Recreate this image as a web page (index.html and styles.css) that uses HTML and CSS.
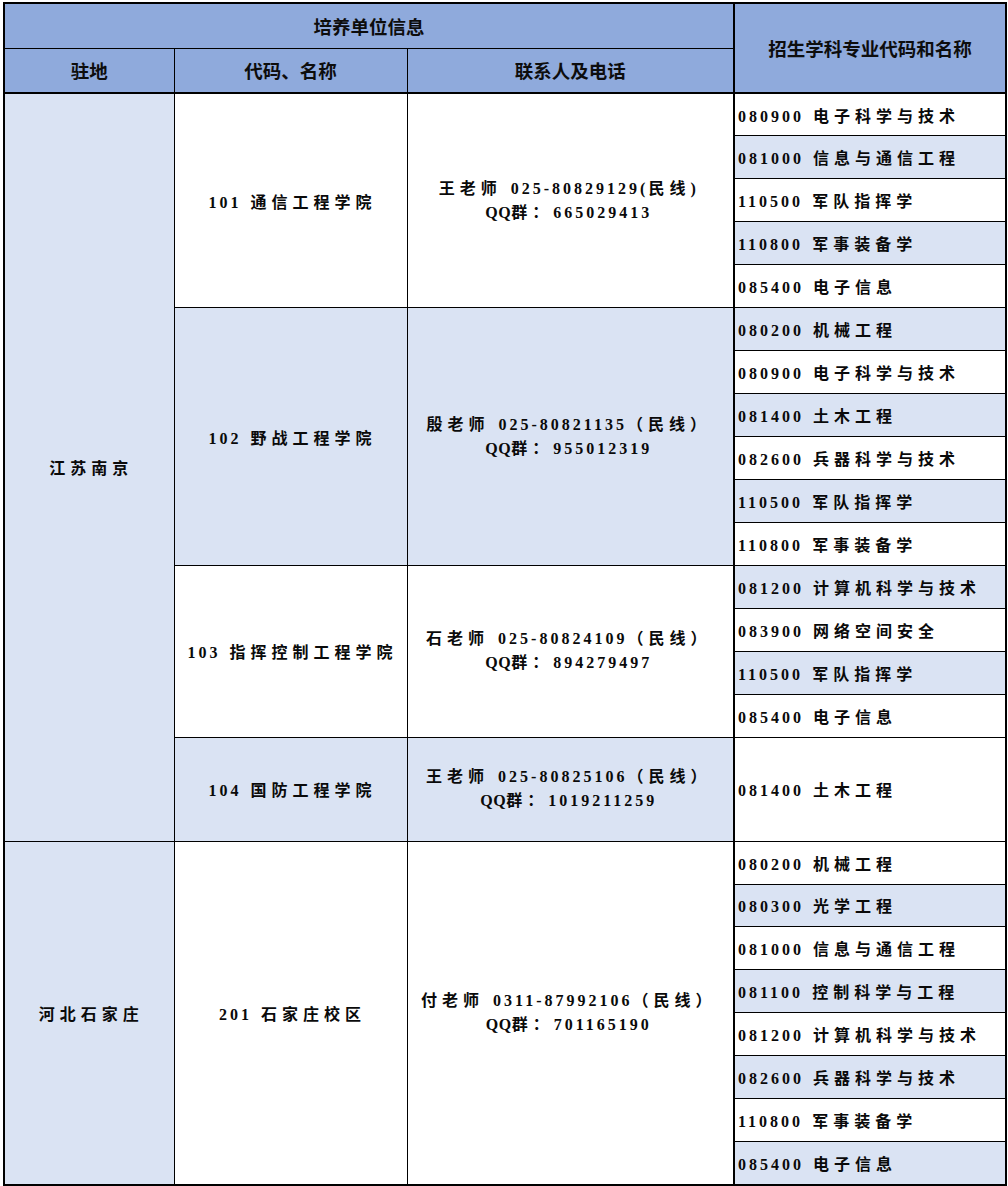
FILE: index.html
```html
<!DOCTYPE html>
<html lang="zh-CN">
<head>
<meta charset="utf-8">
<title>培养单位信息</title>
<link rel="stylesheet" href="styles.css">
</head>
<body>
<table class="grid">
  <colgroup>
    <col class="c1"><col class="c2"><col class="c3"><col class="c4">
  </colgroup>
  <thead>
    <tr class="h1">
      <th colspan="3">培养单位信息</th>
      <th rowspan="2" class="hsub">招生学科专业代码和名称</th>
    </tr>
    <tr class="h2">
      <th>驻地</th>
      <th>代码、名称</th>
      <th>联系人及电话</th>
    </tr>
  </thead>
  <tbody>
    <tr>
      <td rowspan="16" class="loc lt">江苏南京</td>
      <td rowspan="5" class="unit"><span class="n">101</span> 通信工程学院</td>
      <td rowspan="5" class="contact">王老师 <span class="n">025-80829129(</span>民线<span class="n">)</span><br><span class="q">QQ</span>群：<span class="n">665029413</span></td>
      <td class="subj"><span class="n">080900</span> 电子科学与技术</td>
    </tr>
    <tr><td class="subj lt"><span class="n">081000</span> 信息与通信工程</td></tr>
    <tr><td class="subj"><span class="n">110500</span> 军队指挥学</td></tr>
    <tr><td class="subj lt"><span class="n">110800</span> 军事装备学</td></tr>
    <tr><td class="subj"><span class="n">085400</span> 电子信息</td></tr>

    <tr>
      <td rowspan="6" class="unit lt"><span class="n">102</span> 野战工程学院</td>
      <td rowspan="6" class="contact lt">殷老师 <span class="n">025-80821135</span>（民线）<br><span class="q">QQ</span>群：<span class="n">955012319</span></td>
      <td class="subj lt"><span class="n">080200</span> 机械工程</td>
    </tr>
    <tr><td class="subj"><span class="n">080900</span> 电子科学与技术</td></tr>
    <tr><td class="subj lt"><span class="n">081400</span> 土木工程</td></tr>
    <tr><td class="subj"><span class="n">082600</span> 兵器科学与技术</td></tr>
    <tr><td class="subj lt"><span class="n">110500</span> 军队指挥学</td></tr>
    <tr><td class="subj"><span class="n">110800</span> 军事装备学</td></tr>

    <tr>
      <td rowspan="4" class="unit"><span class="n">103</span> 指挥控制工程学院</td>
      <td rowspan="4" class="contact">石老师 <span class="n">025-80824109</span>（民线）<br><span class="q">QQ</span>群：<span class="n">894279497</span></td>
      <td class="subj lt"><span class="n">081200</span> 计算机科学与技术</td>
    </tr>
    <tr><td class="subj"><span class="n">083900</span> 网络空间安全</td></tr>
    <tr><td class="subj lt"><span class="n">110500</span> 军队指挥学</td></tr>
    <tr><td class="subj"><span class="n">085400</span> 电子信息</td></tr>

    <tr class="tall">
      <td class="unit lt"><span class="n">104</span> 国防工程学院</td>
      <td class="contact lt">王老师 <span class="n">025-80825106</span>（民线）<br><span class="q">QQ</span>群：<span class="n">1019211259</span></td>
      <td class="subj"><span class="n">081400</span> 土木工程</td>
    </tr>

    <tr>
      <td rowspan="8" class="loc lt">河北石家庄</td>
      <td rowspan="8" class="unit"><span class="n">201</span> 石家庄校区</td>
      <td rowspan="8" class="contact">付老师 <span class="n">0311-87992106</span>（民线）<br><span class="q">QQ</span>群：<span class="n">701165190</span></td>
      <td class="subj"><span class="n">080200</span> 机械工程</td>
    </tr>
    <tr><td class="subj lt"><span class="n">080300</span> 光学工程</td></tr>
    <tr><td class="subj"><span class="n">081000</span> 信息与通信工程</td></tr>
    <tr><td class="subj lt"><span class="n">081100</span> 控制科学与工程</td></tr>
    <tr><td class="subj"><span class="n">081200</span> 计算机科学与技术</td></tr>
    <tr><td class="subj lt"><span class="n">082600</span> 兵器科学与技术</td></tr>
    <tr><td class="subj"><span class="n">110800</span> 军事装备学</td></tr>
    <tr><td class="subj lt"><span class="n">085400</span> 电子信息</td></tr>
  </tbody>
</table>
</body>
</html>
```
FILE: styles.css
```css
html, body {
  margin: 0;
  padding: 0;
  background: #ffffff;
}

.grid {
  margin: 2px 0 0 3px;
  width: 1004px;
  table-layout: fixed;
  border-collapse: collapse;
  border: 2px solid #000;
  color: #000;
}

.c1 { width: 170px; }
.c2 { width: 233px; }
.c3 { width: 327px; }
.c4 { width: 272px; }

th {
  background: #8faadc;
  font-family: "Noto Sans CJK SC", "Noto Sans", sans-serif;
  font-weight: 700;
  font-size: 18.5px;
  color: #0d0d0d;
  border: 1px solid #000;
  padding: 0;
  text-align: center;
  vertical-align: middle;
}

.h1 { height: 45px; }
.h2 { height: 45px; }
.h2 th { border-bottom: 2px solid #000; }
.hsub { border-left: 2px solid #000; border-bottom: 2px solid #000; }

td {
  border: 1px solid #000;
  padding: 0;
  font-family: "Liberation Serif", "Noto Sans CJK SC", serif;
  font-weight: 700;
  font-size: 16px;
  letter-spacing: 5px;
  vertical-align: middle;
  background: #ffffff;
  color: #0a0a0a;
}

.n { letter-spacing: 3px; }
.q { letter-spacing: 0.5px; }

tbody tr { height: 42.95px; }
tbody tr.tall { height: 104px; }

.lt { background: #dae3f3; }

.loc, .unit {
  text-align: center;
  padding-left: 4px;
}

.contact {
  text-align: center;
  line-height: 24px;
  padding-right: 3px;
}

.subj {
  padding-left: 3px;
  text-align: left;
  border-left: 2px solid #000;
  white-space: nowrap;
}
```
